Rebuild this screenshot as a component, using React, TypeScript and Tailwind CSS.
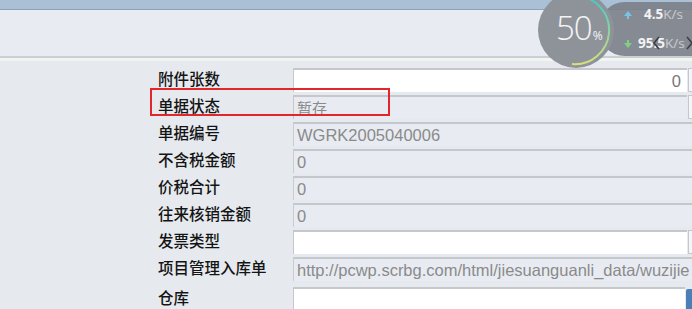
import React from "react";

type Row = {
  label: string;
  value?: string;
  kind: "input" | "readonly" | "select" | "lookup";
  align?: "left" | "right";
};

const rows: Row[] = [
  { label: "附件张数", value: "0", kind: "input", align: "right" },
  { label: "单据状态", value: "暂存", kind: "select" },
  { label: "单据编号", value: "WGRK2005040006", kind: "readonly" },
  { label: "不含税金额", value: "0", kind: "readonly" },
  { label: "价税合计", value: "0", kind: "readonly" },
  { label: "往来核销金额", value: "0", kind: "readonly" },
  { label: "发票类型", value: "", kind: "select" },
  { label: "项目管理入库单", value: "http://pcwp.scrbg.com/html/jiesuanguanli_data/wuzijie", kind: "readonly" },
  { label: "仓库", value: "", kind: "lookup" },
];

function Field({ row }: { row: Row }) {
  const latin = /[a-zA-Z0-9]/.test(row.value || "");
  const text = (
    <span
      className={`overflow-hidden whitespace-nowrap text-[#8a8a8a] ${
        row.align === "right" ? "ml-auto pr-[6px] text-[#777]" : "pl-[3px]"
      } ${latin ? "font-['Liberation_Sans',sans-serif] text-[16.5px]" : "font-['Noto_Sans_CJK_SC',sans-serif] text-[15px]"}`}
    >
      {row.value}
    </span>
  );

  if (row.kind === "readonly") {
    return (
      <div className="flex h-[24px] flex-1 items-center overflow-hidden border-t-2 border-l border-[#c9ccd0] border-t-[#c4c8cc] bg-[#e8ecf2]">
        {text}
      </div>
    );
  }

  const white = row.kind !== "select" || row.value === "";
  return (
    <div className="flex h-[24px] flex-1 items-stretch">
      <div
        className={`flex flex-1 items-center overflow-hidden border-t-2 border-l border-[#c4c8cc] ${
          white ? "bg-white" : "bg-[#e8ecf2]"
        }`}
      >
        {text}
      </div>
      {row.kind === "lookup" ? (
        <div className="ml-[1px] mt-[2px] w-[6px] rounded-l-[2px] bg-[#4a7fb8]" />
      ) : (
        <div className="ml-[1px] w-[4px] border border-r-0 border-[#c4c8cc] bg-[#f4f5f6]" />
      )}
    </div>
  );
}

function SpeedWidget() {
  return (
    <div className="absolute left-[538px] top-[-8px] h-[76px] w-[160px]">
      {/* pill */}
      <div className="absolute left-[60px] top-[10px] h-[54px] w-[110px] rounded-l-[27px] bg-[#7b8087]/90" />
      {/* circle */}
      <div className="absolute left-0 top-0 h-[76px] w-[76px] rounded-full bg-[#8e939a]" />
      <svg className="absolute left-0 top-0" width="76" height="76" viewBox="0 0 76 76">
        <defs>
          <linearGradient id="arc" x1="0" y1="0" x2="0" y2="1">
            <stop offset="0" stopColor="#3fc7c9" />
            <stop offset="1" stopColor="#d8e07a" />
          </linearGradient>
        </defs>
        <path d="M40 4 A34 34 0 0 1 34 72" fill="none" stroke="url(#arc)" strokeWidth="2" />
      </svg>
      <div className="absolute left-[18px] top-[19px] flex items-baseline font-['Open_Sans',sans-serif] text-white/90">
        <span className="text-[33px] font-light leading-none tracking-[-1px]">50</span>
        <span className="ml-[1px] text-[12px] leading-none">%</span>
      </div>
      <svg className="absolute left-[86px] top-[19px]" width="8" height="8" viewBox="0 0 8 8">
        <path d="M4 0 L8 5 L5 5 L5 8 L3 8 L3 5 L0 5 Z" fill="#77c4e4" />
      </svg>
      <div className="absolute left-[106px] top-[16px] font-['Open_Sans',sans-serif] text-[13.5px] font-bold leading-none text-white/90">
        4.5<span className="font-normal text-white/55">K/s</span>
      </div>
      <svg className="absolute left-[86px] top-[48px]" width="8" height="8" viewBox="0 0 8 8">
        <path d="M4 8 L8 3 L5 3 L5 0 L3 0 L3 3 L0 3 Z" fill="#7fcf86" />
      </svg>
      <div className="absolute left-[100px] top-[45px] font-['Open_Sans',sans-serif] text-[13.5px] font-bold leading-none text-white/90">
        95.5<span className="font-normal text-white/55">K/s</span>
      </div>
      <svg className="absolute left-[115px] top-[44px]" width="7" height="14" viewBox="0 0 7 14">
        <path d="M6 1 L1 7 L6 13" fill="none" stroke="#3c3f44" strokeWidth="1.6" />
      </svg>
      <svg className="absolute left-[148px] top-[44px]" width="7" height="14" viewBox="0 0 7 14">
        <path d="M1 1 L6 7 L1 13" fill="none" stroke="#3c3f44" strokeWidth="1.6" />
      </svg>
    </div>
  );
}

export default function App() {
  return (
    <div className="relative h-[309px] w-[692px] overflow-hidden bg-[#e6eaef] font-['Noto_Sans_CJK_SC',sans-serif]">
      <div className="h-[9px] bg-[#a9c0d6]" />
      <div className="h-[1px] bg-[#8ea2b6]" />
      <div className="h-[46px] bg-[#e8ecf2]" />
      <div className="h-[2px] bg-[#cbcfd1]" />
      <div className="h-[3px] bg-[#f1f4f1]" />

      <div className="flex flex-col pl-[158px] pt-[7px]">
        {rows.map((row, i) => (
          <div key={row.label} className={`relative flex h-[27px] items-start ${i === rows.length - 1 ? "mt-[3px]" : ""}`}>
            <div className="w-[135px] text-[15.5px] font-medium leading-[20px] text-[#141414]">{row.label}</div>
            <Field row={row} />
            {i === 1 && (
              <div className="absolute left-[-8px] top-[-7px] h-[28px] w-[240px] border-2 border-[#e2262a]" />
            )}
          </div>
        ))}
      </div>

      <SpeedWidget />
    </div>
  );
}
